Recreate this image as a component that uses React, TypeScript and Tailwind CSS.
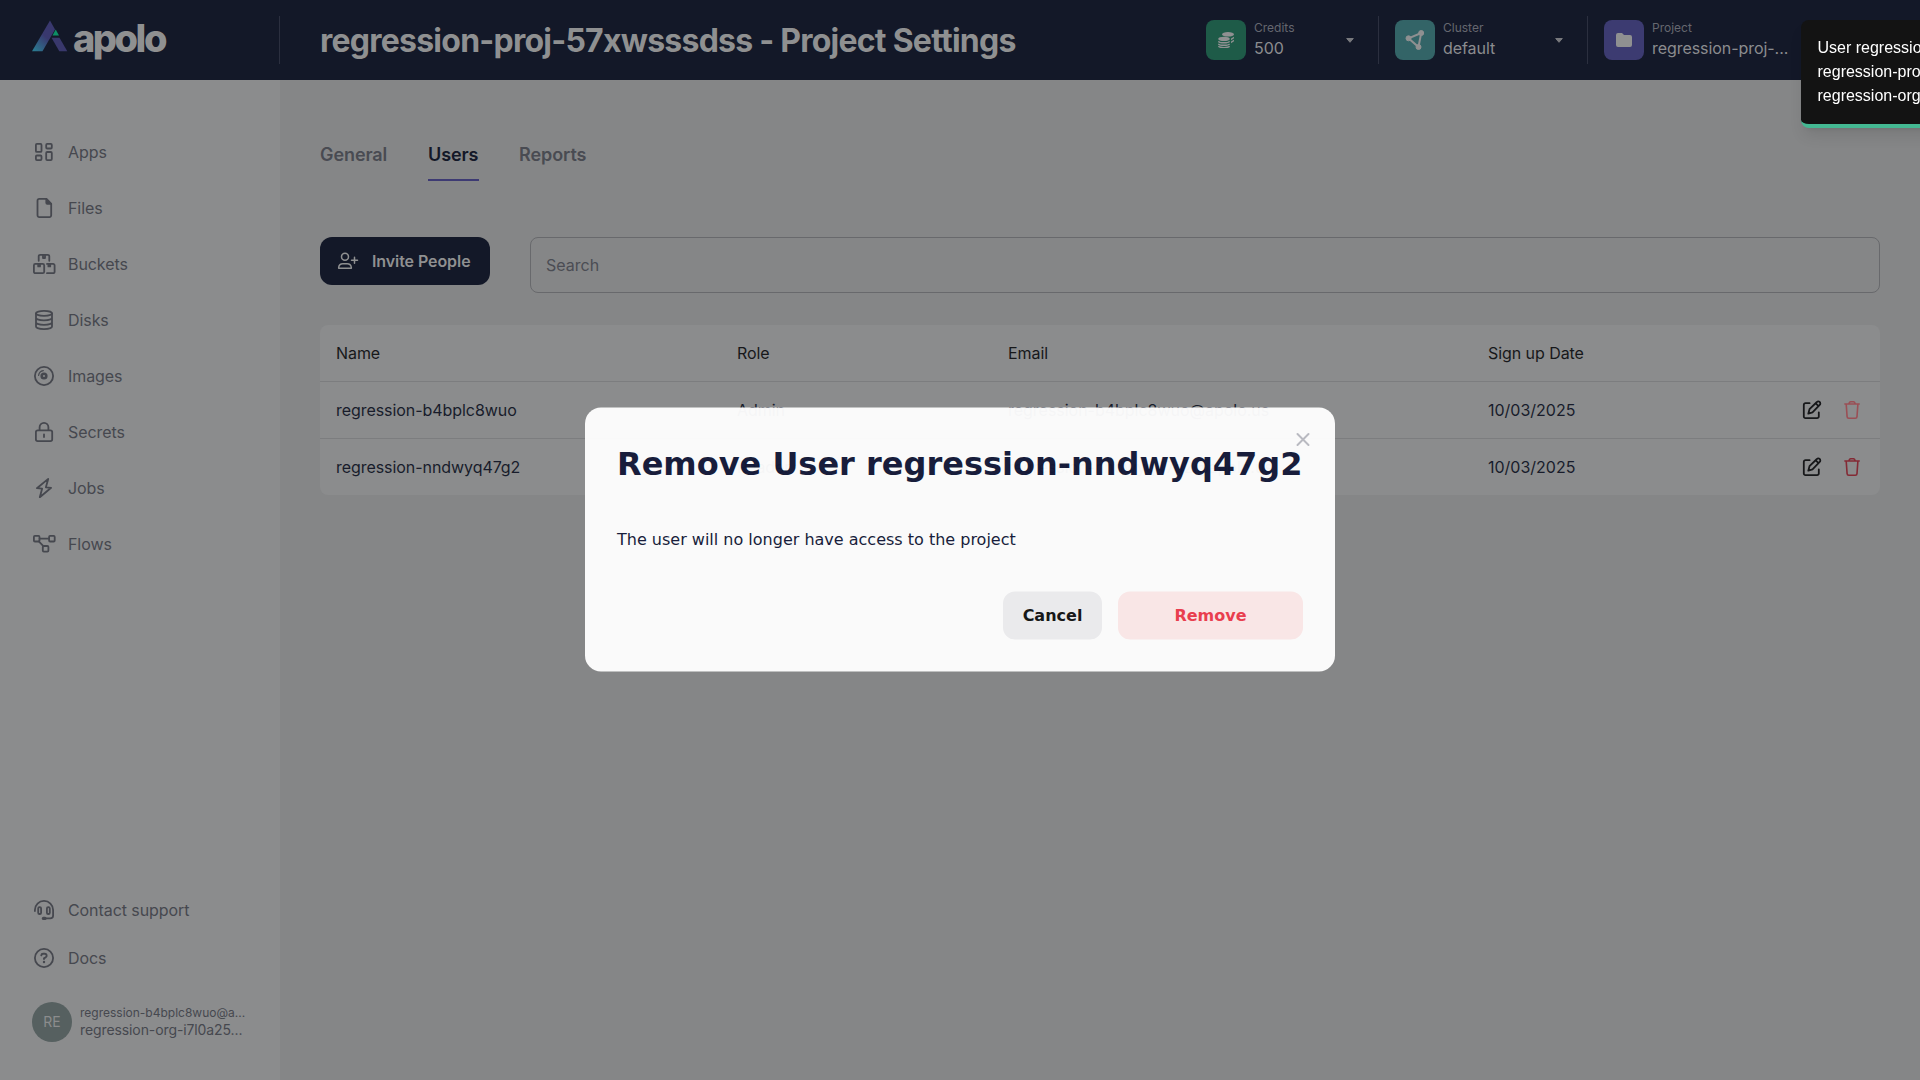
import React from "react";

type IconProps = { children: React.ReactNode; className?: string };

function Glyph({ children, className = "" }: IconProps) {
  return (
    <svg
      viewBox="0 0 24 24"
      width="24"
      height="24"
      fill="none"
      stroke="currentColor"
      strokeWidth="1.8"
      strokeLinecap="round"
      strokeLinejoin="round"
      className={`shrink-0 ${className}`}
    >
      {children}
    </svg>
  );
}

const nav = [
  {
    label: "Apps",
    icon: (
      <Glyph>
        <rect x="3.9" y="3.9" width="5.6" height="8" rx="1" />
        <rect x="14.2" y="3.9" width="5.6" height="4.6" rx="1" />
        <rect x="3.9" y="15.5" width="5.6" height="4.6" rx="1" />
        <rect x="14.2" y="12" width="5.6" height="8.1" rx="1" />
      </Glyph>
    ),
  },
  {
    label: "Files",
    icon: (
      <Glyph>
        <path d="M14.3 2.9H7.3A1.8 1.8 0 0 0 5.5 4.7v14.6a1.8 1.8 0 0 0 1.8 1.8h10.1a1.8 1.8 0 0 0 1.8-1.8V7.8z" />
        <path d="M14.3 3v3.8a1 1 0 0 0 1 1h3.8z" fill="currentColor" />
      </Glyph>
    ),
  },
  {
    label: "Buckets",
    icon: (
      <Glyph>
        <path d="M6.7 8.8V4.3a1.5 1.5 0 0 1 1.5-1.5h7.6a1.5 1.5 0 0 1 1.5 1.5v4.5" />
        <path d="M11 3v3h2V3" />
        <rect x="1.9" y="11.9" width="10.3" height="9.3" rx="1.5" />
        <path d="M15 11.9h6.1a1.5 1.5 0 0 1 1.5 1.5v6.3a1.5 1.5 0 0 1-1.5 1.5H15M6.2 12.4v2h1.8v-2M16.4 12.4v2h1.8v-2" />
      </Glyph>
    ),
  },
  {
    label: "Disks",
    icon: (
      <Glyph>
        <ellipse cx="12" cy="5.3" rx="8" ry="2.5" />
        <path d="M4 5.3v13.3c0 1.4 3.6 2.5 8 2.5s8-1.1 8-2.5V5.3M4 9.8c0 1.4 3.6 2.5 8 2.5s8-1.1 8-2.5M4 14.3c0 1.4 3.6 2.5 8 2.5s8-1.1 8-2.5" />
      </Glyph>
    ),
  },
  {
    label: "Images",
    icon: (
      <Glyph>
        <circle cx="12" cy="12" r="9.1" />
        <circle cx="12" cy="12" r="2.3" strokeWidth="2.6" />
        <path d="M6.6 11.3A5.6 5.6 0 0 1 11.3 6.6" strokeWidth="1.2" />
      </Glyph>
    ),
  },
  {
    label: "Secrets",
    icon: (
      <Glyph>
        <rect x="3.9" y="10.3" width="16.3" height="10.8" rx="1.8" />
        <path d="M7.6 10V7.2a4.4 4.4 0 0 1 8.8 0V10M12 14.3v2.8" />
      </Glyph>
    ),
  },
  {
    label: "Jobs",
    icon: (
      <Glyph>
        <path d="M16.2 2.9 4.9 12.2 10.1 12.7 7.8 21.2 19.1 11.8 13.9 11.3z" />
      </Glyph>
    ),
  },
  {
    label: "Flows",
    icon: (
      <Glyph>
        <rect x="1.9" y="3.9" width="5.6" height="5.6" rx="1" />
        <rect x="17.1" y="3.9" width="5.6" height="5.6" rx="1" />
        <rect x="10.8" y="14" width="5.6" height="5.6" rx="1" />
        <path d="M7.6 6.7H17M6.8 9.4l4.8 5" />
      </Glyph>
    ),
  },
];

const support = [
  {
    label: "Contact support",
    icon: (
      <Glyph>
        <path d="M2.9 13v-1a9.1 9.1 0 0 1 18.2 0v5.4a2.9 2.9 0 0 1-2.9 2.9H13" />
        <rect x="6.2" y="9.2" width="2.9" height="6.8" rx="1.3" />
        <rect x="14.9" y="9.2" width="2.9" height="6.8" rx="1.3" />
        <path d="M11.4 20.4h1.6" strokeWidth="3.2" />
      </Glyph>
    ),
  },
  {
    label: "Docs",
    icon: (
      <Glyph>
        <circle cx="12" cy="12" r="9.1" />
        <path d="M9.3 9.3a1.8 1.8 0 0 1 1.8-1.6h1.7a1.9 1.9 0 0 1 1 3.5L12 12.4v.7" strokeWidth="1.9" />
        <circle cx="12" cy="16" r="1.2" fill="currentColor" stroke="none" />
      </Glyph>
    ),
  },
];

function Logo() {
  return (
    <div className="flex w-[280px] shrink-0 items-center pl-8">
      <svg width="36" height="32" viewBox="0 0 36 32" className="-mt-[9px] shrink-0">
        <defs>
          <linearGradient id="limb" x1="0" y1="1" x2="0.7" y2="0">
            <stop offset="0.05" stopColor="#2b7b91" />
            <stop offset="0.6" stopColor="#39386e" />
          </linearGradient>
        </defs>
        <path d="M0 31.3 18 0.5 23 9.500 10.500 31.300z" fill="url(#limb)" />
        <path d="M19.500 17.800h8L35.300 31.300H27.300z" fill="#39386c" />
        <path d="M23.700 9.500 27 15.500H20.500z" fill="#0d8f66" />
      </svg>
      <span className="-mt-1 ml-[5px] text-[38px] leading-none font-extrabold tracking-[-2.5px] text-[#8f9091]">apolo</span>
    </div>
  );
}

type SelectorProps = {
  label: string;
  value: string;
  color: string;
  icon: React.ReactNode;
  className: string;
  caret?: boolean;
};

function Selector({ label, value, color, icon, className, caret = true }: SelectorProps) {
  return (
    <div className={`flex h-12 items-center pl-4 ${className}`}>
      <div className={`flex size-10 shrink-0 items-center justify-center rounded-lg text-[#8f9091] ${color}`}>{icon}</div>
      <div className="ml-2 whitespace-nowrap">
        <div className="text-[12px] leading-4 text-[#65676f]">{label}</div>
        <div className="text-[16px] leading-6 tracking-[-0.06px] text-[#8b8c8f]">{value}</div>
      </div>
      {caret && (
        <svg width="8" height="5" viewBox="0 0 8 5" className="mt-px mr-6 ml-auto">
          <path d="M0.700 0.500h6.600L4 4.300z" fill="#78797d" stroke="#78797d" strokeLinejoin="round" />
        </svg>
      )}
    </div>
  );
}

function Header() {
  return (
    <header className="flex h-20 items-center bg-[#131828]">
      <Logo />
      <div className="-ml-px h-12 w-px shrink-0 bg-[#2b2f3f]" />
      <h1 className="mt-px ml-10 text-[32px] leading-10 font-bold tracking-[-0.76px] whitespace-nowrap text-[#8f9091]">
        regression-proj-57xwsssdss - Project Settings
      </h1>
      <div className="ml-auto flex w-[730px] shrink-0">
        <Selector
          label="Credits"
          value="500"
          color="bg-[#1e5b48]"
          className="w-[189px] border-r border-[#2b2f3f]"
          icon={
            <svg width="16" height="16" viewBox="0 0 16 16" fill="currentColor">
              <ellipse cx="10" cy="2.300" rx="6" ry="2.300" />
              <ellipse cx="6" cy="6.900" rx="5.800" ry="2.200" />
              <path
                d="M.4 9.300c1.500 2 9.700 2 11.200 0M.4 11.800c1.500 2 9.700 2 11.200 0M.4 14.200c1.500 1.900 9.700 1.900 11.200 0"
                fill="none"
                stroke="currentColor"
                strokeWidth="1.400"
              />
              <path d="M13 6.500l3-1.800v1.600l-3 2zM13 9.500l3-1.800v1.600l-3 2z" />
            </svg>
          }
        />
        <Selector
          label="Cluster"
          value="default"
          color="bg-[#336467]"
          className="w-[209px] border-r border-[#2b2f3f]"
          icon={
            <svg width="20" height="20" viewBox="0 0 20 20" fill="currentColor" stroke="currentColor">
              <path d="M3.500 8.300 16.200 3 13.500 17z" fill="none" strokeWidth="2" />
              <circle cx="3.500" cy="8.300" r="2.500" />
              <circle cx="16.200" cy="3" r="2.500" />
              <circle cx="13.500" cy="17" r="2.500" />
            </svg>
          }
        />
        <Selector
          label="Project"
          value="regression-proj-..."
          color="bg-[#3c3b71]"
          className="w-[209px]"
          caret={false}
          icon={
            <svg width="16" height="14" viewBox="0 0 16 14" fill="currentColor">
              <path d="M2 0h4l2 2h6a2 2 0 0 1 2 2v8a2 2 0 0 1-2 2H2a2 2 0 0 1-2-2V2a2 2 0 0 1 2-2z" />
            </svg>
          }
        />
      </div>
    </header>
  );
}

function NavLink({ label, icon }: { label: string; icon: React.ReactNode }) {
  return (
    <a className="flex h-6 items-center gap-3 text-base tracking-[-0.08px]">
      {icon}
      {label}
    </a>
  );
}

function Sidebar() {
  return (
    <aside className="flex w-[280px] shrink-0 flex-col bg-[#8b8c8d] px-8 pt-[60px] pb-[38px] text-[#46484f]">
      <nav className="flex flex-col gap-8">
        {nav.map((n) => (
          <NavLink key={n.label} {...n} />
        ))}
      </nav>
      <div className="mt-auto flex flex-col gap-6">
        {support.map((n) => (
          <NavLink key={n.label} {...n} />
        ))}
      </div>
      <div className="mt-8 flex h-10 items-center gap-2">
        <div className="flex size-10 shrink-0 items-center justify-center rounded-full bg-[#566060] pb-px text-[14px] text-[#8b8c8d]">RE</div>
        <div className="whitespace-nowrap">
          <div className="text-[12px] leading-4">regression-b4bplc8wuo@a...</div>
          <div className="text-[14px] leading-[18px] tracking-[-0.1px]">regression-org-i7l0a25...</div>
        </div>
      </div>
    </aside>
  );
}

const rows = [
  { name: "regression-b4bplc8wuo", role: "Admin", email: "regression-b4bplc8wuo@apolo.us", date: "10/03/2025", trash: "text-[#9a4f55]" },
  { name: "regression-nndwyq47g2", role: "Reader", email: "regression-nndwyq47g2@apolo.us", date: "10/03/2025", trash: "text-[#842a35]" },
];

function UsersTable() {
  return (
    <div className="mt-8 overflow-hidden rounded-lg bg-[#8b8c8d] text-base tracking-[-0.06px] text-[#181c2b]">
      <div className="grid h-[57px] grid-cols-[401px_271px_480px_1fr] items-center border-b border-[#7c7d7f] px-4 text-[#17181a]">
        <span>Name</span>
        <span>Role</span>
        <span>Email</span>
        <span>Sign up Date</span>
      </div>
      {rows.map((r) => (
        <div
          key={r.name}
          className="grid h-[57px] grid-cols-[401px_271px_480px_1fr_auto] items-center border-b border-[#7c7d7f] px-4 last:h-14 last:border-b-0"
        >
          <span>{r.name}</span>
          <span>{r.role}</span>
          <span className="tracking-[-0.02px]">{r.email}</span>
          <span className="tracking-normal">{r.date}</span>
          <span className="flex gap-4">
            <Glyph className="text-[#17181a]">
              <path d="M9.600 5.200H5.500a1.700 1.700 0 0 0-1.700 1.700v11.600a1.700 1.700 0 0 0 1.700 1.700h11.600a1.700 1.700 0 0 0 1.700-1.700v-4.200" />
              <path d="M8.300 15.700l1.200-4.500 7.400-7.200a1.900 1.900 0 0 1 2.800 0 1.900 1.900 0 0 1 0 2.800l-7.200 7.500zM15.800 5.400l2.700 2.700" />
            </Glyph>
            <Glyph className={r.trash}>
              <path d="M4.900 6h14.300M6.200 6l.9 12.600a1.700 1.700 0 0 0 1.700 1.600h6.500a1.700 1.700 0 0 0 1.700-1.600L17.900 6M8.800 5.800l.9-1.600a1.200 1.200 0 0 1 1-.5h2.700a1.200 1.200 0 0 1 1 .5l.9 1.600" strokeWidth="1.600" />
            </Glyph>
          </span>
        </div>
      ))}
    </div>
  );
}

function Main() {
  return (
    <main className="flex-1 bg-[#858687] px-10 pt-[60px]">
      <div className="flex gap-10 text-[18px] leading-7 font-semibold tracking-[-0.08px] text-[#494b52]">
        <span className="h-[41px] w-[68px] pt-px">General</span>
        <span className="h-[41px] w-[51px] border-b-2 border-[#3d3a73] pt-px text-[#131828]">Users</span>
        <span className="pt-px">Reports</span>
      </div>
      <div className="mt-14 flex items-start gap-10">
        <button className="flex h-12 w-[170px] items-center rounded-xl bg-[#131828] pl-4 text-base font-semibold tracking-[-0.08px] whitespace-nowrap text-[#8f9091]">
          <svg width="24" height="24" viewBox="0 0 24 24" fill="none" stroke="currentColor" strokeWidth="1.500" strokeLinecap="round" strokeLinejoin="round">
            <circle cx="9" cy="7.700" r="3.500" />
            <path d="M2.700 19.300v-1a4.200 4.200 0 0 1 4.200-3.500h4.200a4.200 4.200 0 0 1 4.200 3.500v1zM18.500 8.200v6M15.500 11.200h6" />
          </svg>
          <span className="ml-3">Invite People</span>
        </button>
        <div className="flex h-14 flex-1 items-center rounded-lg border border-[#68696c] px-[15px] text-base text-[#4b4d54]">Search</div>
      </div>
      <UsersTable />
    </main>
  );
}

function RemoveDialog() {
  return (
    <div className="fixed inset-0 flex items-center justify-center font-['DejaVu_Sans',sans-serif]">
      <div className="relative h-[264px] w-[750px] -translate-y-[0.5px] rounded-2xl bg-white p-8 text-[#131938] opacity-[0.955]">
        <h2 className="text-[32px] leading-12 font-bold whitespace-nowrap">Remove User regression-nndwyq47g2</h2>
        <p className="mt-10 text-base">The user will no longer have access to the project</p>
        <div className="mt-10 flex justify-end gap-4 text-base font-bold">
          <button className="h-12 w-[99px] rounded-xl bg-[#efeff1] text-[#131313]">Cancel</button>
          <button className="h-12 w-[185px] rounded-xl bg-[#feebeb] text-[#ee3b4d]">Remove</button>
        </div>
        <svg className="absolute top-[25px] right-[25px]" width="14" height="14" viewBox="0 0 14 14" stroke="#bcbdc4" strokeWidth="2" strokeLinecap="round">
          <path d="M1.500 1.500l11 11M12.500 1.500l-11 11" />
        </svg>
      </div>
    </div>
  );
}

function Toast() {
  return (
    <div className="fixed top-5 left-[1801px] w-[320px] rounded-lg border-b-4 border-[#44b892] bg-[#131313] p-4 pl-[16.5px] font-['Liberation_Sans',sans-serif] text-base leading-6 whitespace-nowrap text-white shadow-lg">
      <div>User regression-nndwyq47g2</div>
      <div>regression-proj-57xwsssdss</div>
      <div>regression-org-i7l0a25</div>
    </div>
  );
}

export default function App() {
  return (
    <div className="flex h-[1080px] w-[1920px] flex-col overflow-hidden font-['Inter',sans-serif]">
      <Header />
      <div className="flex flex-1">
        <Sidebar />
        <Main />
      </div>
      <RemoveDialog />
      <Toast />
    </div>
  );
}
